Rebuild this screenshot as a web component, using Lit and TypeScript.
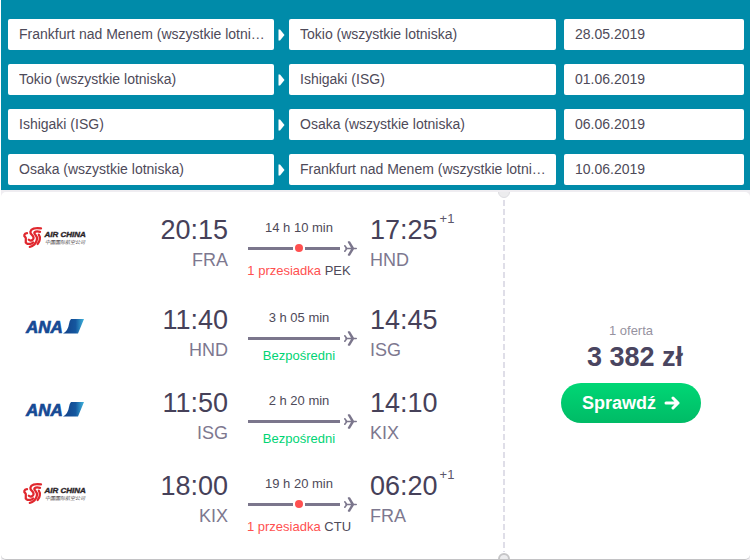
import { LitElement, html, css, svg, nothing } from "lit";
import { customElement, property } from "lit/decorators.js";

interface Query {
  from: string;
  to: string;
  date: string;
}

interface Leg {
  airline: "airchina" | "ana";
  depart: string;
  origin: string;
  duration: string;
  via?: string;
  arrive: string;
  destination: string;
  plusDays?: string;
}

const QUERIES: Query[] = [
  { from: "Frankfurt nad Menem (wszystkie lotniska)", to: "Tokio (wszystkie lotniska)", date: "28.05.2019" },
  { from: "Tokio (wszystkie lotniska)", to: "Ishigaki (ISG)", date: "01.06.2019" },
  { from: "Ishigaki (ISG)", to: "Osaka (wszystkie lotniska)", date: "06.06.2019" },
  { from: "Osaka (wszystkie lotniska)", to: "Frankfurt nad Menem (wszystkie lotniska)", date: "10.06.2019" },
];

const LEGS: Leg[] = [
  { airline: "airchina", depart: "20:15", origin: "FRA", duration: "14 h 10 min", via: "PEK", arrive: "17:25", destination: "HND", plusDays: "+1" },
  { airline: "ana", depart: "11:40", origin: "HND", duration: "3 h 05 min", arrive: "14:45", destination: "ISG" },
  { airline: "ana", depart: "11:50", origin: "ISG", duration: "2 h 20 min", arrive: "14:10", destination: "KIX" },
  { airline: "airchina", depart: "18:00", origin: "KIX", duration: "19 h 20 min", via: "CTU", arrive: "06:20", destination: "FRA", plusDays: "+1" },
];

@customElement("search-form")
export class SearchForm extends LitElement {
  static styles = css`
    :host {
      display: block;
    }
    .form {
      display: flex;
      flex-direction: column;
      gap: 14px;
      padding: 19px 6px 5px 7px;
      margin: 0 0 0 1px;
      background: #008ba9;
    }
    .row {
      display: grid;
      grid-template-columns: minmax(0, 266fr) 15px minmax(0, 267fr) 8px minmax(0, 180fr);
      align-items: center;
    }
    .field {
      box-sizing: border-box;
      width: 100%;
      height: 31px;
      padding: 0 8px 0 11px;
      border: 0;
      border-radius: 2px;
      background: #fff;
      color: #4e4a59;
      font: 14px/31px "Liberation Sans", Arial, sans-serif;
      text-overflow: ellipsis;
    }
    .date {
      grid-column: 5;
    }
    .arrow {
      display: block;
      justify-self: center;
      fill: #fff;
    }
  `;

  render() {
    return html`
      <form class="form">
        ${QUERIES.map(
          (q) => html`
            <div class="row">
              <input class="field" type="text" aria-label="Z" .value=${q.from} />
              <svg class="arrow" width="7" height="12" viewBox="0 0 7 12" aria-hidden="true">
                <path d="M0.500 0.500H2L6.500 6L2 11.500H0.500Z" />
              </svg>
              <input class="field" type="text" aria-label="Do" .value=${q.to} />
              <input class="field date" type="text" aria-label="Data" .value=${q.date} />
            </div>
          `
        )}
      </form>
    `;
  }
}

@customElement("airline-logo")
export class AirlineLogo extends LitElement {
  @property() airline = "ana";

  static styles = css`
    :host,
    .logo {
      display: block;
    }
    .latin {
      font: italic bold 8px "Liberation Sans", Arial, sans-serif;
      fill: #2b2528;
      stroke: #2b2528;
      stroke-width: 0.4;
    }
    .han {
      font: italic 5px "Noto Sans CJK SC", sans-serif;
      fill: #4a4547;
    }
    .ana {
      font: italic bold 17px "Liberation Sans", Arial, sans-serif;
      fill: #164a94;
      stroke: #164a94;
      stroke-width: 0.7;
    }
    .plume {
      fill: none;
      stroke: #e0282e;
      stroke-width: 2.3;
      stroke-linecap: round;
    }
  `;

  private airChina() {
    return svg`
      <path class="plume" d="M19 6.400C13 5.400 9 7 8.400 9.800C8 12.800 11.800 12.800 11.600 16C11.400 18.400 8.400 19.400 6.800 17.800" />
      <path class="plume" d="M18 9.800C14.500 9 12 9.600 12.400 11.200C12.800 12.800 15.400 13.600 15 17.200C14.600 21.400 11 24.400 7.800 24.800" />
      <path class="plume" d="M5 11.200C2 11.600 1.600 13.800 3.200 15C5.200 16.600 2.400 19.600 4.400 21.200C6.600 22.600 9.800 21.800 11 20.400" />
      <path class="plume" d="M16.800 12.600C18.600 15.200 18 19.400 15.600 22" />
      <text class="latin" x="22.500" y="14.500">AIR CHINA</text>
      <text class="han" x="23" y="22">中国国际航空公司</text>
    `;
  }

  private ana() {
    return svg`
      <defs>
        <linearGradient id="tail" x1="0" x2="1">
          <stop offset="0" stop-color="#123f86" />
          <stop offset="0.6" stop-color="#15579f" />
          <stop offset="1" stop-color="#3fb4dc" />
        </linearGradient>
      </defs>
      <text class="ana" x="4" y="21">ANA</text>
      <path d="M49 7H62L56 21.500H41Q46 19 47 12Q47.500 8.500 49 7Z" fill="url(#tail)" />
    `;
  }

  render() {
    const china = this.airline === "airchina";
    return html`
      <svg class="logo" width="66" height="30" viewBox="0 0 66 30" role="img" aria-label=${china ? "Air China" : "ANA"}>
        ${china ? this.airChina() : this.ana()}
      </svg>
    `;
  }
}

@customElement("flight-leg")
export class FlightLeg extends LitElement {
  @property({ attribute: false }) leg!: Leg;

  static styles = css`
    :host {
      display: block;
    }
    .leg {
      display: grid;
      grid-template-columns: 66px minmax(0, 127fr) 116px minmax(0, 134fr);
      column-gap: 13px;
      align-items: start;
      padding-bottom: 23px;
    }
    .logo {
      margin-top: 8px;
    }
    .depart {
      text-align: right;
    }
    .clock {
      display: flex;
      align-items: flex-start;
      gap: 2px;
    }
    .time {
      color: #464159;
      font-size: 27px;
      line-height: 32px;
    }
    .days {
      color: #5b566b;
      font-size: 13px;
      line-height: 10px;
    }
    .code {
      color: #7d788f;
      font-size: 18px;
      line-height: 28px;
    }
    .path {
      padding-top: 4px;
      text-align: center;
      font-size: 13px;
      color: #4e4a59;
    }
    .duration {
      line-height: 20px;
    }
    .track {
      display: flex;
      align-items: center;
      gap: 2px;
      height: 20px;
      padding-left: 7px;
    }
    .first,
    .last {
      height: 3px;
      background: #7b768c;
    }
    .first {
      flex: 45;
    }
    .last {
      flex: 35;
    }
    .dot {
      width: 8px;
      height: 8px;
      border-radius: 50%;
      background: #ff5050;
    }
    .plane {
      margin-left: 2px;
      fill: none;
      stroke: #7b768c;
      stroke-width: 1.6;
      stroke-linecap: round;
      stroke-linejoin: round;
    }
    .label {
      line-height: 16px;
    }
    .direct {
      color: #00d474;
    }
    .via {
      padding: 5px 0 2px;
      white-space: nowrap;
    }
    .stop {
      color: #ff5050;
    }
  `;

  render() {
    const l = this.leg;
    return html`
      <div class="leg">
        <airline-logo class="logo" airline=${l.airline}></airline-logo>
        <div class="depart">
          <div class="time">${l.depart}</div>
          <div class="code">${l.origin}</div>
        </div>
        <div class="path">
          <div class="duration">${l.duration}</div>
          <div class="track">
            <span class="first"></span>
            ${l.via ? html`<span class="dot"></span><span class="last"></span>` : nothing}
            <svg class="plane" width="13" height="15" viewBox="0 0 13 15" aria-hidden="true">
              <path d="M2 7.500H12.200M4.600 1L8.400 7.500L4.600 14M4.600 1H5.400L9.400 7.500L5.400 14H4.600M0.800 4.800L2.800 7.500L0.800 10.200" />
            </svg>
          </div>
          ${l.via
            ? html`<div class="label via"><span class="stop">1 przesiadka</span> ${l.via}</div>`
            : html`<div class="label direct">Bezpośredni</div>`}
        </div>
        <div class="arrive">
          <div class="clock">
            <span class="time">${l.arrive}</span>
            ${l.plusDays ? html`<span class="days">${l.plusDays}</span>` : nothing}
          </div>
          <div class="code">${l.destination}</div>
        </div>
      </div>
    `;
  }
}

@customElement("app-root")
export class AppRoot extends LitElement {
  static styles = css`
    :host {
      display: flex;
      flex-direction: column;
      min-height: 100vh;
      background: #fff;
      font-family: "Liberation Sans", Arial, sans-serif;
    }
    .results {
      flex: 1;
      display: flex;
      padding-top: 2px;
      margin-left: 1px;
      background: #efedf1;
    }
    .ticket {
      flex: 1;
      position: relative;
      display: grid;
      grid-template-columns: minmax(0, 503fr) minmax(0, 246fr);
      box-sizing: border-box;
      overflow: hidden;
      border-bottom: 1px solid #c2c2c4;
      border-radius: 5px;
      background: #fff;
    }
    .legs {
      position: relative;
      padding: 22px 0 0 21px;
      margin-bottom: -1px;
    }
    .perforation {
      position: absolute;
      top: 8px;
      bottom: 8px;
      right: -1px;
      width: 2px;
      background: repeating-linear-gradient(#dfdee8 0 6px, transparent 6px 9px);
    }
    .notch {
      position: absolute;
      right: -6px;
      box-sizing: border-box;
      width: 12px;
      height: 12px;
      border-radius: 50%;
      background: #ececee;
    }
    .upper {
      top: -6px;
      border: 1px solid #dcdce0;
    }
    .lower {
      bottom: -5px;
      border: 2px solid #c6c6c8;
    }
    .offer {
      display: flex;
      flex-direction: column;
      align-items: center;
      justify-content: center;
      padding: 0 0 5px 8px;
    }
    .count {
      color: #96929f;
      font-size: 13px;
      line-height: 16px;
    }
    .price {
      padding-left: 8px;
      color: #4a4560;
      font-size: 27px;
      font-weight: bold;
      line-height: 36px;
    }
    .check {
      display: flex;
      align-items: center;
      justify-content: center;
      gap: 8px;
      width: 140px;
      height: 40px;
      margin-top: 8px;
      padding: 0;
      border: 0;
      border-radius: 20px;
      background: linear-gradient(#00d775, #00bb66);
      color: #fff;
      font: bold 18px "Liberation Sans", Arial, sans-serif;
    }
    .go {
      fill: none;
      stroke: #fff;
      stroke-width: 3;
      stroke-linecap: round;
      stroke-linejoin: round;
    }
  `;

  render() {
    return html`
      <search-form></search-form>
      <main class="results">
        <section class="ticket">
          <div class="legs">
            ${LEGS.map((leg) => html`<flight-leg .leg=${leg}></flight-leg>`)}
            <div class="perforation"></div>
            <div class="notch upper"></div>
            <div class="notch lower"></div>
          </div>
          <div class="offer">
            <div class="count">1 oferta</div>
            <div class="price">3 382 zł</div>
            <button class="check" type="button">
              Sprawdź
              <svg class="go" width="16" height="16" viewBox="0 0 16 16" aria-hidden="true">
                <path d="M2 8H14M9 3L14 8L9 13" />
              </svg>
            </button>
          </div>
        </section>
      </main>
    `;
  }
}
